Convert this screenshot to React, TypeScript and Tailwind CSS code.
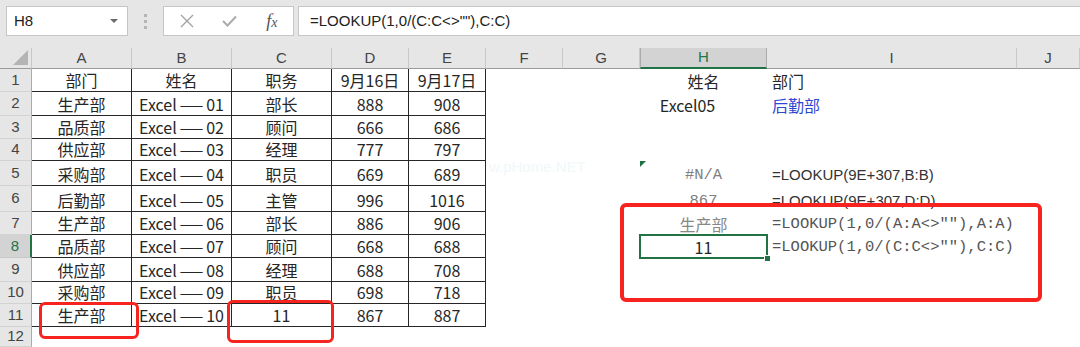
import React from "react";

// ─── data ─────────────────────────────────────────────────────────────────
const COLS = ["A", "B", "C", "D", "E", "F", "G", "H", "I", "J"];

const depts = ["生产部", "品质部", "供应部", "采购部", "后勤部", "生产部", "品质部", "供应部", "采购部", "生产部"];
const jobs = ["部长", "顾问", "经理", "职员", "主管", "部长", "顾问", "经理", "职员", "11"];
const d16 = ["888", "666", "777", "669", "996", "886", "668", "688", "698", "867"];
const d17 = ["908", "686", "797", "689", "1016", "906", "688", "708", "718", "887"];

const MONO = "font-['Liberation_Mono',monospace] text-[15.5px]";

// ─── FormulaBar ───────────────────────────────────────────────────────────
function FormulaBar() {
  return (
    <div className="flex h-[48px] items-start bg-[#e6e6e6] pl-[6px] pt-[6px]">
      <div className="flex h-[30px] w-[122px] items-center justify-between border border-[#c6c6c6] bg-white pl-[7px] pr-[9px] font-['Liberation_Sans',sans-serif] text-[15px] text-[#222]">
        <span>H8</span>
        <span className="h-0 w-0 border-x-[4px] border-t-[4px] border-x-transparent border-t-[#6b6b6b]" />
      </div>
      <div className="flex h-[30px] w-[35px] flex-col items-center justify-center gap-[3px]">
        <span className="h-[3px] w-[3px] bg-[#b5b5b5]" />
        <span className="h-[3px] w-[3px] bg-[#b5b5b5]" />
        <span className="h-[3px] w-[3px] bg-[#b5b5b5]" />
      </div>
      <div className="flex h-[30px] w-[131px] items-center border border-[#c6c6c6] bg-white pl-[2px]">
        <span className="flex w-[43px] justify-center">
          <svg width="14" height="14" viewBox="0 0 14 14">
            <path d="M1 1 L13 13 M13 1 L1 13" stroke="#a3a3a3" strokeWidth="1.4" fill="none" />
          </svg>
        </span>
        <span className="flex w-[43px] justify-center">
          <svg width="15" height="12" viewBox="0 0 15 12">
            <path d="M1 6 L5.5 10.5 L14 1.5" stroke="#ababab" strokeWidth="2" fill="none" />
          </svg>
        </span>
        <span className="flex w-[43px] justify-center font-['Liberation_Serif',serif] italic text-[#555]">
          <span className="text-[18px] leading-none">f</span>
          <span className="text-[14px] leading-none pt-[4px]">x</span>
        </span>
      </div>
      <div className="ml-[4px] flex h-[30px] flex-1 items-center border border-r-0 border-[#c6c6c6] bg-white pl-[11px] font-['Liberation_Sans',sans-serif] text-[15px] text-[#222]">
        =LOOKUP(1,0/(C:C&lt;&gt;""),C:C)
      </div>
    </div>
  );
}

// ─── cell pieces ──────────────────────────────────────────────────────────
function ExcelName({ n }: { n: string }) {
  return (
    <span className="flex items-end">
      Excel
      <span className="mx-[3px] text-[14px] leading-[20px]">——</span>
      {n}
    </span>
  );
}

function tableCell(row: number, col: number): React.ReactNode {
  if (row === 1) return ["部门", "姓名", "职务", "9月16日", "9月17日"][col];
  const i = row - 2;
  if (col === 0) return depts[i];
  if (col === 1) return <ExcelName n={String(i + 1).padStart(2, "0")} />;
  if (col === 2) return jobs[i];
  if (col === 3) return d16[i];
  return d17[i];
}

function RightCells({ row }: { row: number }) {
  const h = "flex items-end justify-center pb-[1px] leading-[20px]";
  const i = "flex items-end pl-[5px] pb-[1px] leading-[20px] whitespace-nowrap";
  switch (row) {
    case 1:
      return (
        <>
          <div className={h}>姓名</div>
          <div className={i}>部门</div>
        </>
      );
    case 2:
      return (
        <>
          <div className={`${h} pr-[32px]`}>Excel05</div>
          <div className={`${i} text-[#2f48d0]`}>后勤部</div>
        </>
      );
    case 5:
      return (
        <>
          <div className={`relative ${h} ${MONO} text-[#7f7f7f]`}>
            <svg className="absolute left-0 top-0" width="6" height="6" viewBox="0 0 6 6">
              <polygon points="0,0 6,0 0,6" fill="#1e7145" />
            </svg>
            #N/A
          </div>
          <div className={`${i} font-['Liberation_Sans',sans-serif] text-[15px] text-[#333]`}>=LOOKUP(9E+307,B:B)</div>
        </>
      );
    case 6:
      return (
        <>
          <div className={`${h} ${MONO} text-[#7f7f7f]`}>867</div>
          <div className={`${i} font-['Liberation_Sans',sans-serif] text-[15px] text-[#333]`}>=LOOKUP(9E+307,D:D)</div>
        </>
      );
    case 7:
      return (
        <>
          <div className={`${h} text-[#888]`}>生产部</div>
          <div className={`${i} ${MONO} text-[#555]`}>=LOOKUP(1,0/(A:A&lt;&gt;″″),A:A)</div>
        </>
      );
    case 8:
      return (
        <>
          <div className={`relative ${h}`}>
            <div className="absolute -inset-px border-2 border-[#217346]" />
            <div className="absolute -bottom-[4px] -right-[4px] h-[7px] w-[7px] border border-white bg-[#217346]" />
            11
          </div>
          <div className={`${i} ${MONO} text-[#555]`}>=LOOKUP(1,0/(C:C&lt;&gt;″″),C:C)</div>
        </>
      );
    default:
      return (
        <>
          <div />
          <div />
        </>
      );
  }
}

// ─── Sheet ────────────────────────────────────────────────────────────────
function Sheet() {
  const rows = Array.from({ length: 12 }, (_, k) => k + 1);
  return (
    <div className="grid grid-cols-[32px_100px_100px_100px_77px_77px_77px_77px_127px_250px_63px] grid-rows-[21px_23px_24px_23px_22px_25px_26px_23px_23px_24px_22px_23px_20px]">
      {/* corner */}
      <div className="relative border-b border-r border-b-[#9b9b9b] border-r-[#c8c8c8] bg-[#e6e6e6]">
        <svg className="absolute bottom-[3px] right-[3px]" width="15" height="15" viewBox="0 0 15 15">
          <polygon points="15,0 15,15 0,15" fill="#b4b4b4" />
        </svg>
      </div>
      {COLS.map((c) =>
        c === "H" ? (
          <div
            key={c}
            className="flex items-center justify-center border-x border-b-2 border-x-[#ababab] border-b-[#217346] bg-[#d3d3d3] font-['Liberation_Sans',sans-serif] text-[15px] text-[#217346]"
          >
            {c}
          </div>
        ) : (
          <div
            key={c}
            className="flex items-center justify-center border-b border-r border-b-[#9b9b9b] border-r-[#c8c8c8] bg-[#e6e6e6] font-['Liberation_Sans',sans-serif] text-[15px] text-[#444]"
          >
            {c}
          </div>
        )
      )}

      {rows.map((r) => (
        <React.Fragment key={r}>
          {r === 8 ? (
            <div className="flex items-center justify-center border-b border-r-2 border-b-[#c8c8c8] border-r-[#217346] bg-[#d3d3d3] font-['Liberation_Sans',sans-serif] text-[15px] text-[#217346]">
              {r}
            </div>
          ) : (
            <div className="flex items-center justify-center border-b border-r border-b-[#d2d2d2] border-r-[#ababab] bg-[#e6e6e6] font-['Liberation_Sans',sans-serif] text-[15px] text-[#444]">
              {r}
            </div>
          )}
          {[0, 1, 2, 3, 4].map((c) =>
            r <= 11 ? (
              <div
                key={c}
                className="flex items-end justify-center whitespace-nowrap border-b border-r border-[#262626] pb-[1px] leading-[20px]"
              >
                {tableCell(r, c)}
              </div>
            ) : (
              <div key={c} />
            )
          )}
          <div />
          <div />
          <RightCells row={r} />
          <div />
        </React.Fragment>
      ))}
    </div>
  );
}

export default function App() {
  return (
    <div className="relative h-[347px] w-[1080px] overflow-hidden bg-white font-['Noto_Sans_CJK_SC',sans-serif] text-[16px] text-[#262626]">
      <FormulaBar />
      <Sheet />

      {/* faint watermark */}
      <div className="absolute left-[489px] top-[156px] whitespace-nowrap font-['Liberation_Sans',sans-serif] text-[15px] text-[#f1f8fa]">
        w.pHome.NET
      </div>

      {/* red annotations */}
      <div className="absolute left-[39px] top-[302px] h-[37px] w-[100px] rounded-[6px] border-[3px] border-[#f7231f]" />
      <div className="absolute left-[227px] top-[300px] h-[43px] w-[107px] rounded-[6px] border-[3px] border-[#f7231f]" />
      <div className="absolute left-[620px] top-[203px] h-[99px] w-[422px] rounded-[6px] border-[4px] border-[#f7231f]" />
    </div>
  );
}
